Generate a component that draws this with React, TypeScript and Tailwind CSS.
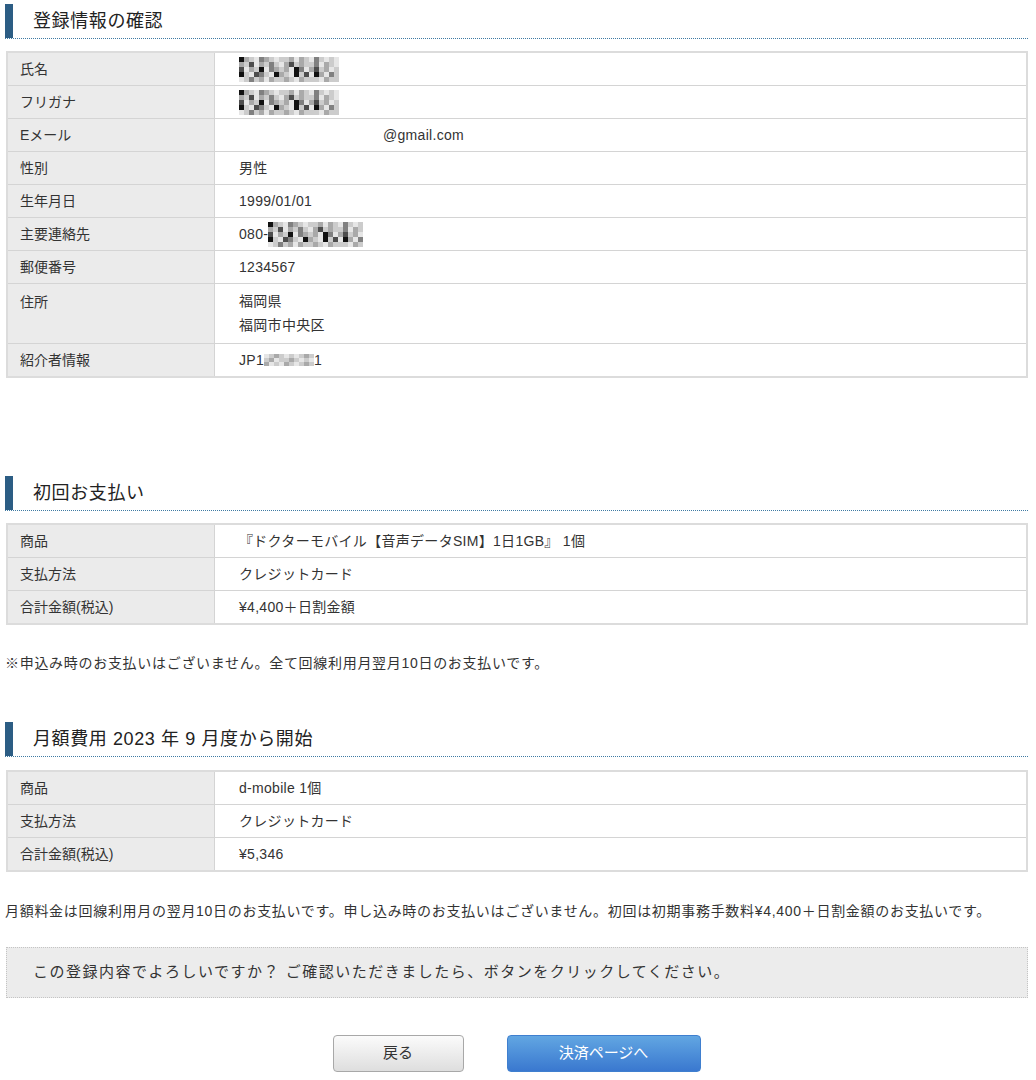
import React from "react";

const font = {
  fontFamily: '"Liberation Sans", "Noto Sans CJK JP", sans-serif',
};

// gray levels for the censor mosaic
const tones = [
  "bg-white",
  "bg-[#e6e6e6]",
  "bg-[#cccccc]",
  "bg-[#a9a9a9]",
  "bg-[#808080]",
  "bg-[#4d4d4d]",
  "bg-[#111111]",
];

const nameMosaic = [
  "63214321223132142121",
  "32513242135232241321",
  "51326143231641352312",
  "62154216321625163142",
  "12423132232132221322",
];

const phoneMosaic = [
  "6321432122313214212",
  "3251324213523224132",
  "5132614323164135231",
  "6215421632162516314",
  "1242313223213222132",
];

const refMosaic = [
  "1232121232",
  "2312232121",
  "3121321232",
];

function Mosaic({ rows, cell = "w-[5px] h-[5px]" }: { rows: string[]; cell?: string }) {
  return (
    <span className="inline-flex flex-col align-middle">
      {rows.map((r, i) => (
        <span key={i} className="flex">
          {r.split("").map((c, j) => (
            <span key={j} className={`${cell} ${tones[Number(c)]}`} />
          ))}
        </span>
      ))}
    </span>
  );
}

function Heading({ children }: { children: React.ReactNode }) {
  return (
    <div className="flex h-[35px] items-stretch border-b border-dotted border-[#3f7aa3]">
      <div className="w-[8px] bg-[#2c5d84]" />
      <div className="flex items-center pl-5 text-[18px] tracking-[0.6px] text-[#222]">{children}</div>
    </div>
  );
}

type Row = { label: string; value: React.ReactNode; tall?: boolean };

function InfoTable({ rows }: { rows: Row[] }) {
  return (
    <div className="border-2 border-[#dcdcdc]">
      {rows.map((r, i) => (
        <div
          key={r.label}
          className={`grid grid-cols-[207px_1fr] text-[14px] text-[#333] ${
            i > 0 ? "border-t border-[#d4d4d4]" : ""
          }`}
        >
          <div
            className={`bg-[#ebebeb] px-3 border-r border-[#d4d4d4] ${
              r.tall ? "pt-[8px] h-[59px]" : "h-[32px] flex items-center"
            }`}
          >
            {r.label}
          </div>
          <div
            className={`bg-white pl-[24px] tracking-[0.3px] ${
              r.tall ? "pt-[5px] h-[59px] leading-[24px]" : "h-[32px] flex items-center"
            }`}
          >
            {r.value}
          </div>
        </div>
      ))}
    </div>
  );
}

export default function App() {
  const profile: Row[] = [
    { label: "氏名", value: <Mosaic rows={nameMosaic} /> },
    { label: "フリガナ", value: <Mosaic rows={nameMosaic} /> },
    { label: "Eメール", value: <span className="pl-[144px]">@gmail.com</span> },
    { label: "性別", value: "男性" },
    { label: "生年月日", value: "1999/01/01" },
    {
      label: "主要連絡先",
      value: (
        <span className="flex items-center">
          080-
          <Mosaic rows={phoneMosaic} />
        </span>
      ),
    },
    { label: "郵便番号", value: "1234567" },
    {
      label: "住所",
      tall: true,
      value: (
        <>
          <div>福岡県</div>
          <div>福岡市中央区</div>
        </>
      ),
    },
    {
      label: "紹介者情報",
      value: (
        <span className="flex items-center">
          JP1
          <Mosaic rows={refMosaic} cell="w-[5px] h-[4px]" />
          1
        </span>
      ),
    },
  ];

  const first: Row[] = [
    { label: "商品", value: "『ドクターモバイル【音声データSIM】1日1GB』 1個" },
    { label: "支払方法", value: "クレジットカード" },
    { label: "合計金額(税込)", value: "¥4,400＋日割金額" },
  ];

  const monthly: Row[] = [
    { label: "商品", value: "d-mobile 1個" },
    { label: "支払方法", value: "クレジットカード" },
    { label: "合計金額(税込)", value: "¥5,346" },
  ];

  return (
    <div className="min-h-screen bg-white pl-[5px] pr-[8px] pt-[4px] text-[#333]" style={font}>
      <Heading>登録情報の確認</Heading>
      <div className="mt-[12px] ml-[1px]">
        <InfoTable rows={profile} />
      </div>

      <div className="mt-[98px]">
        <Heading>初回お支払い</Heading>
      </div>
      <div className="mt-[12px] ml-[1px]">
        <InfoTable rows={first} />
      </div>
      <p className="mt-[28px] text-[14px] leading-[20px] tracking-[0.7px] text-[#333]">
        ※申込み時のお支払いはございません。全て回線利用月翌月10日のお支払いです。
      </p>

      <div className="mt-[49px]">
        <Heading>月額費用 2023 年 9 月度から開始</Heading>
      </div>
      <div className="mt-[13px] ml-[1px]">
        <InfoTable rows={monthly} />
      </div>
      <p className="mt-[29px] text-[14px] leading-[20px] tracking-[0.7px] text-[#333]">
        月額料金は回線利用月の翌月10日のお支払いです。申し込み時のお支払いはございません。初回は初期事務手数料¥4,400＋日割金額のお支払いです。
      </p>

      <div className="mt-[26px] ml-[1px] flex h-[51px] items-center border border-dotted border-[#c4c4c4] bg-[#ececec] pl-[26px] text-[15px] tracking-[1.5px] text-[#333]">
        この登録内容でよろしいですか？ ご確認いただきましたら、ボタンをクリックしてください。
      </div>

      <div className="mt-[37px] flex justify-center gap-[43px]">
        <button className="h-[37px] w-[131px] rounded-[4px] border border-[#a8a8a8] bg-gradient-to-b from-[#fbfbfb] to-[#dedede] text-[15px] text-[#333]">
          戻る
        </button>
        <button className="h-[37px] w-[194px] rounded-[4px] border border-[#3f7fcf] bg-gradient-to-b from-[#62a6e2] to-[#3a78cf] text-[15px] text-white">
          決済ページへ
        </button>
      </div>
    </div>
  );
}
